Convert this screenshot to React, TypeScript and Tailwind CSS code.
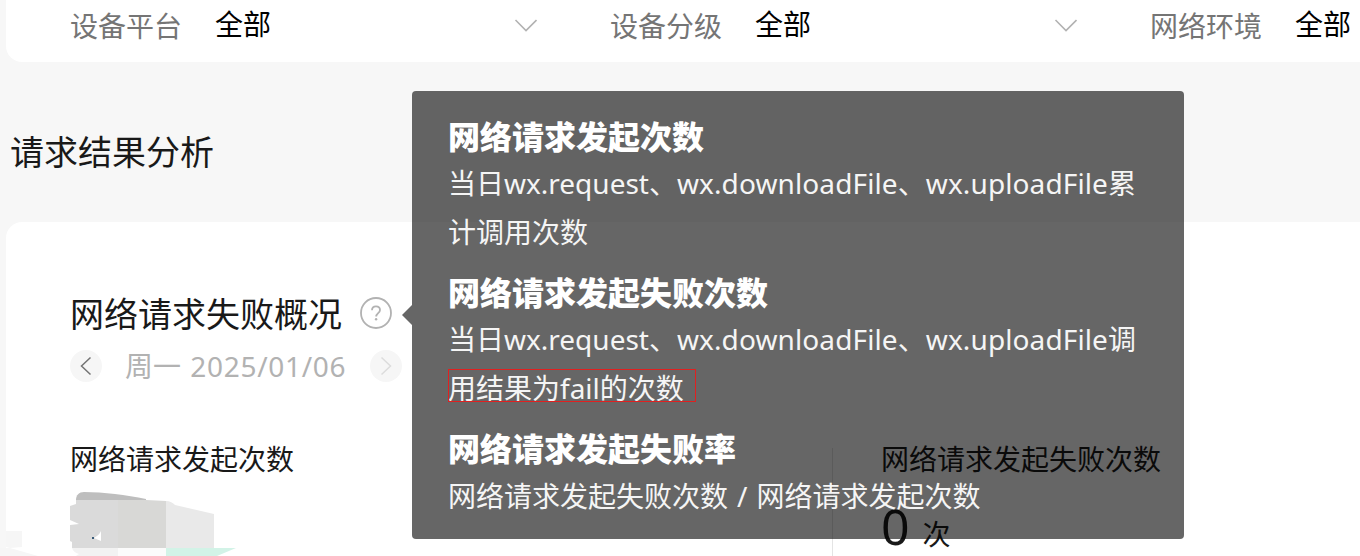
import { ReactNode } from "react";

const filters = [
  { label: "设备平台", value: "全部" },
  { label: "设备分级", value: "全部" },
  { label: "网络环境", value: "全部" },
];

const Chevron = () => (
  <svg className="w-6 h-4 shrink-0" viewBox="0 0 24 16" fill="none" stroke="#b2b2b2" strokeWidth="1.6">
    <path d="M2.5 2 13 12.5 23.5 2" />
  </svg>
);

const FilterBar = () => (
  <div className="ml-[6px] h-[62px] bg-white rounded-bl-2xl flex overflow-hidden pl-16">
    {filters.map((item) => (
      <div key={item.label} className="w-[540px] shrink-0 h-[52px] flex items-center">
        <span className="w-[145px] text-[28px] leading-[52px] text-[#757575]">{item.label}</span>
        <span className="w-[298px] text-[28px] leading-[52px] -mt-1 text-black">{item.value}</span>
        <Chevron />
      </div>
    ))}
  </div>
);

const ArrowButton = ({ d, color }: { d: string; color: string }) => (
  <button className="w-8 h-8 rounded-full bg-[#f6f6f6] flex items-center justify-center">
    <svg className="w-8 h-8" viewBox="0 0 32 32" fill="none" stroke={color} strokeWidth="1.5">
      <path d={d} />
    </svg>
  </button>
);

// masked figure under the first stat
const MaskedValue = () => (
  <svg className="w-[250px] h-[76px] block" viewBox="0 480 250 76">
    <path d="M6 531h16v16l-12 1-4-1z" fill="#f6f6f6" />
    <path d="M0 548h10l28 8H0z" fill="#f6f6f6" />
    <path d="M76 500c0-5 3-8 8-8 20 0 42 3 62 7v2H76z" fill="#bebebe" />
    <path d="M76 500h42v48H72v-6l-2-1v-16l9-1-9-4v-14l6-2z" fill="#dadada" />
    <path d="M118 500h28l20 1v47h-48z" fill="#d8d8d6" />
    <path d="M166 501c4 0 7 2 9 4l39 9v34h-48z" fill="#e9e9e9" />
    <path d="M72 548h46v8H76l3-2c-4-1-6-3-7-6z" fill="#f2f2f2" />
    <path d="M118 548h48v8h-48z" fill="#fbfbfb" />
    <path d="M166 548h70l-19 8h-51z" fill="#d2f3e7" />
    <path d="M101 531c-1 3-4 5-7 7l7 3z" fill="#fff" />
    <path d="M92 537h2v2h-2z" fill="#395b78" />
  </svg>
);

const TipItem = ({ title, children }: { title: string; children: ReactNode }) => (
  <div className="mb-3">
    <p className="text-[32px] leading-[50px] h-12 font-black text-white">{title}</p>
    <div className="text-[28px] leading-[48px] text-[#f5f5f5] whitespace-nowrap">{children}</div>
  </div>
);

const Tooltip = () => (
  <div className="absolute left-[412px] top-[91px] w-[772px] h-[448px] rounded-[4px] bg-black/60 pl-9 pt-[21px]">
    <div className="absolute -left-[10px] top-[214px] w-[10px] h-5 bg-black/60 [clip-path:polygon(100%_0,0_50%,100%_100%)]" />
    <TipItem title="网络请求发起次数">
      <p className="leading-[46px] h-12">
        当日wx.request、<span className="tracking-[0.11px]">wx.downloadFile、wx.uploadFile累</span>
      </p>
      <p>计调用次数</p>
    </TipItem>
    <TipItem title="网络请求发起失败次数">
      <p className="leading-[46px] h-12">
        当日wx.request、<span className="tracking-[0.11px]">wx.downloadFile、wx.uploadFile调</span>
      </p>
      <p className="relative">
        用结果为fail的次数
        <span className="absolute left-0 top-[5px] w-[248px] h-[33px] border border-[#e02020]" />
      </p>
    </TipItem>
    <TipItem title="网络请求发起失败率">
      <p className="[word-spacing:1.7px]">网络请求发起失败次数 / 网络请求发起次数</p>
    </TipItem>
  </div>
);

const App = () => {
  return (
    <div className="relative w-[1360px] h-[556px] overflow-hidden bg-[#f7f7f7] font-['Noto_Sans','Noto_Sans_CJK_SC',sans-serif] text-[#191919]">
      <FilterBar />
      <h2 className="h-[160px] pl-[10px] pt-[66px] text-[34px] leading-[48px]">请求结果分析</h2>

      <div className="ml-[6px] h-[334px] bg-white rounded-tl-2xl pt-[67px]">
        <div className="pl-16 flex items-center h-[50px]">
          <h3 className="text-[34px] leading-[50px]">网络请求失败概况</h3>
          <svg className="ml-[18px] -mt-[2px] w-8 h-8" viewBox="0 0 32 32" fill="none" stroke="#b2b2b2">
            <circle cx="16" cy="16" r="15" strokeWidth="1.8" />
            <path d="M12 13.2c0-2.3 1.7-3.8 4-3.8s4 1.5 4 3.6c0 3-3.8 3.3-3.8 6.5" strokeWidth="1.8" />
            <circle cx="16.1" cy="22.3" r="1.2" fill="#b2b2b2" stroke="none" />
          </svg>
        </div>
        <div className="pl-16 flex items-center h-[54px]">
          <ArrowButton d="M20.5 7.5 11.5 16l9 8.5" color="#737373" />
          <span className="ml-[23px] w-[245px] text-[28px] text-[#b2b2b2]">
            周一 <span className="ml-[2px] tracking-[0.7px]">2025/01/06</span>
          </span>
          <ArrowButton d="m11.5 7.5 9 8.5-9 8.5" color="#dcdcdc" />
        </div>
        <div className="flex mt-[55px]">
          <div className="w-[826px] shrink-0">
            <p className="pl-16 text-[28px] leading-[44px] h-[43px] -mt-[11px]">网络请求发起次数</p>
            <div className="-ml-[6px]">
              <MaskedValue />
            </div>
          </div>
          <div className="border-l border-[#e4e4e4] pl-12 h-[108px]">
            <p className="text-[28px] leading-[44px] -mt-[11px]">网络请求发起失败次数</p>
            <p className="flex items-baseline mt-[18px]">
              <span className="text-[50px] leading-[54px]">0</span>
              <span className="ml-[13px] text-[28px] leading-[40px]">次</span>
            </p>
          </div>
        </div>
      </div>

      <Tooltip />
    </div>
  );
};

export default App;
